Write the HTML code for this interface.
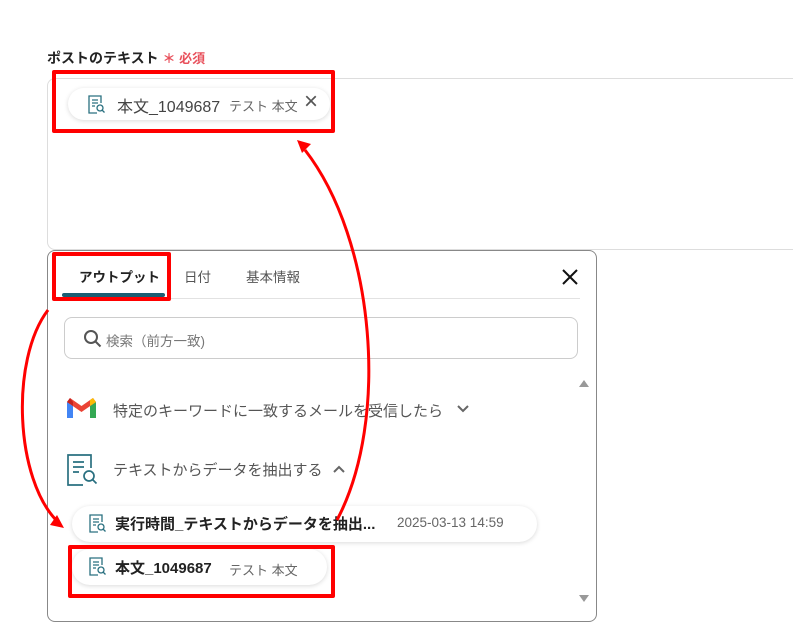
<!DOCTYPE html>
<html><head><meta charset="utf-8"><style>
body{margin:0;width:793px;height:625px;background:#fff;position:relative;overflow:hidden;font-family:"Liberation Sans","Noto Sans CJK JP",sans-serif;color:#333}
.a{position:absolute}
.chip{position:absolute;background:#fff;border-radius:20px;box-shadow:0 1px 5px rgba(0,0,0,.15)}
.red{position:absolute;border:4px solid #f00;border-radius:2px;box-sizing:border-box}
</style></head><body>
<div class="a" style="left:47px;top:48px;font-size:14px;font-weight:bold;color:#222">ポストのテキスト <span style="color:#e8505b;font-size:13px">＊ 必須</span></div>
<div class="a" style="left:47px;top:78px;width:760px;height:170px;border:1px solid #ddd;border-radius:8px"></div>
<div class="chip" style="left:68px;top:88px;width:262px;height:32px"></div>
<svg class="a" style="left:88px;top:95px" width="17" height="19" viewBox="0 0 17 19" fill="none" stroke="#2a7080" stroke-width="1.3"><path d="M13 8V1H1v17h8"/><path d="M4 5h6M4 8h6M4 11h3"/><circle cx="12" cy="13" r="3"/><path d="M14 15l2.5 2.5"/></svg>
<div class="a" style="left:117px;top:93px;font-size:16px;color:#444">本文_1049687</div>
<div class="a" style="left:229px;top:96px;font-size:13px;color:#666">テスト 本文</div>
<div class="a" style="left:304px;top:88px;font-size:24px;color:#555">×</div>
<div class="red" style="left:52px;top:70px;width:283px;height:63px"></div>

<div class="a" style="left:47px;top:250px;width:548px;height:370px;border:1px solid #888;border-radius:8px"></div>
<div class="a" style="left:79px;top:266px;font-size:13.5px;font-weight:bold;color:#222">アウトプット</div>
<div class="a" style="left:184px;top:266px;font-size:13.5px;color:#555">日付</div>
<div class="a" style="left:246px;top:266px;font-size:13.5px;color:#555">基本情報</div>
<div class="a" style="left:62px;top:298px;width:518px;height:1px;background:#e2e2e2"></div>
<div class="a" style="left:62px;top:293px;width:103px;height:4px;background:#1a5e73;border-radius:2px"></div>
<svg class="a" style="left:562px;top:269px" width="16" height="16" stroke="#111" stroke-width="2"><path d="M1 1l14 14M15 1L1 15"/></svg>
<div class="red" style="left:52px;top:252px;width:119px;height:49px"></div>

<div class="a" style="left:64px;top:317px;width:514px;height:42px;border:1px solid #ccc;border-radius:8px;box-sizing:border-box"></div>
<svg class="a" style="left:83px;top:329px" width="19" height="19" fill="none" stroke="#555" stroke-width="2"><circle cx="8" cy="8" r="6"/><path d="M12.5 12.5l5 5"/></svg>
<div class="a" style="left:106px;top:330px;font-size:13.5px;color:#777">検索（前方一致)</div>
<div class="a" style="left:579px;top:380px;width:0;height:0;border:5px solid transparent;border-bottom:7px solid #999;border-top:0"></div>
<div class="a" style="left:579px;top:595px;width:0;height:0;border:5px solid transparent;border-top:7px solid #999;border-bottom:0"></div>

<svg class="a" style="left:67px;top:398px" width="29" height="22" viewBox="0 0 29 22"><path d="M0 4v16h6V8z" fill="#4285f4"/><path d="M23 8v12h6V4z" fill="#34a853"/><path d="M0 4l14.5 10L29 4 26 0 14.5 8 3 0z" fill="#ea4335"/><path d="M23 2l3-2 3 4-6 4z" fill="#fbbc04"/><path d="M0 4l3-4 3 4v4z" fill="#c5221f"/></svg>
<div class="a" style="left:113px;top:400px;font-size:15px;color:#555">特定のキーワードに一致するメールを受信したら</div>
<svg class="a" style="left:457px;top:405px" width="12" height="9" fill="none" stroke="#666" stroke-width="2"><path d="M1 1l5 5 5-5"/></svg>

<svg class="a" style="left:67px;top:454px" width="31" height="32" viewBox="0 0 31 32" fill="none" stroke="#2a7080" stroke-width="1.7"><path d="M24 14V1H1v30h15"/><path d="M6 8h11M6 13h11M6 18h6"/><circle cx="22" cy="22" r="5"/><path d="M25.5 25.5l4 4"/></svg>
<div class="a" style="left:113px;top:459px;font-size:15px;color:#555">テキストからデータを抽出する</div>
<svg class="a" style="left:333px;top:465px" width="12" height="9" fill="none" stroke="#666" stroke-width="2"><path d="M1 7l5-5 5 5"/></svg>

<div class="chip" style="left:72px;top:506px;width:465px;height:36px"></div>
<svg class="a" style="left:89px;top:514px" width="17" height="19" viewBox="0 0 17 19" fill="none" stroke="#2a7080" stroke-width="1.3"><path d="M13 8V1H1v17h8"/><path d="M4 5h6M4 8h6M4 11h3"/><circle cx="12" cy="13" r="3"/><path d="M14 15l2.5 2.5"/></svg>
<div class="a" style="left:115px;top:513px;font-size:15px;font-weight:bold;color:#222">実行時間_テキストからデータを抽出...</div>
<div class="a" style="left:397px;top:515px;font-size:13.5px;color:#666">2025-03-13 14:59</div>

<div class="chip" style="left:72px;top:549px;width:255px;height:36px"></div>
<svg class="a" style="left:89px;top:557px" width="17" height="19" viewBox="0 0 17 19" fill="none" stroke="#2a7080" stroke-width="1.3"><path d="M13 8V1H1v17h8"/><path d="M4 5h6M4 8h6M4 11h3"/><circle cx="12" cy="13" r="3"/><path d="M14 15l2.5 2.5"/></svg>
<div class="a" style="left:115px;top:557px;font-size:15px;font-weight:bold;color:#222">本文_1049687</div>
<div class="a" style="left:229px;top:560px;font-size:13px;color:#666">テスト 本文</div>
<div class="red" style="left:68px;top:545px;width:267px;height:53px"></div>

<svg class="a" style="left:0;top:0" width="793" height="625" fill="none" stroke="#f00" stroke-width="3">
<path d="M337 520C390 420 375 240 305 150"/>
<path d="M297 140l14 4-9 9z" fill="#f00" stroke="none"/>
<path d="M48 310C10 360 15 480 58 522"/>
<path d="M64 528l-14-3 7-10z" fill="#f00" stroke="none"/>
</svg>
</body></html>
